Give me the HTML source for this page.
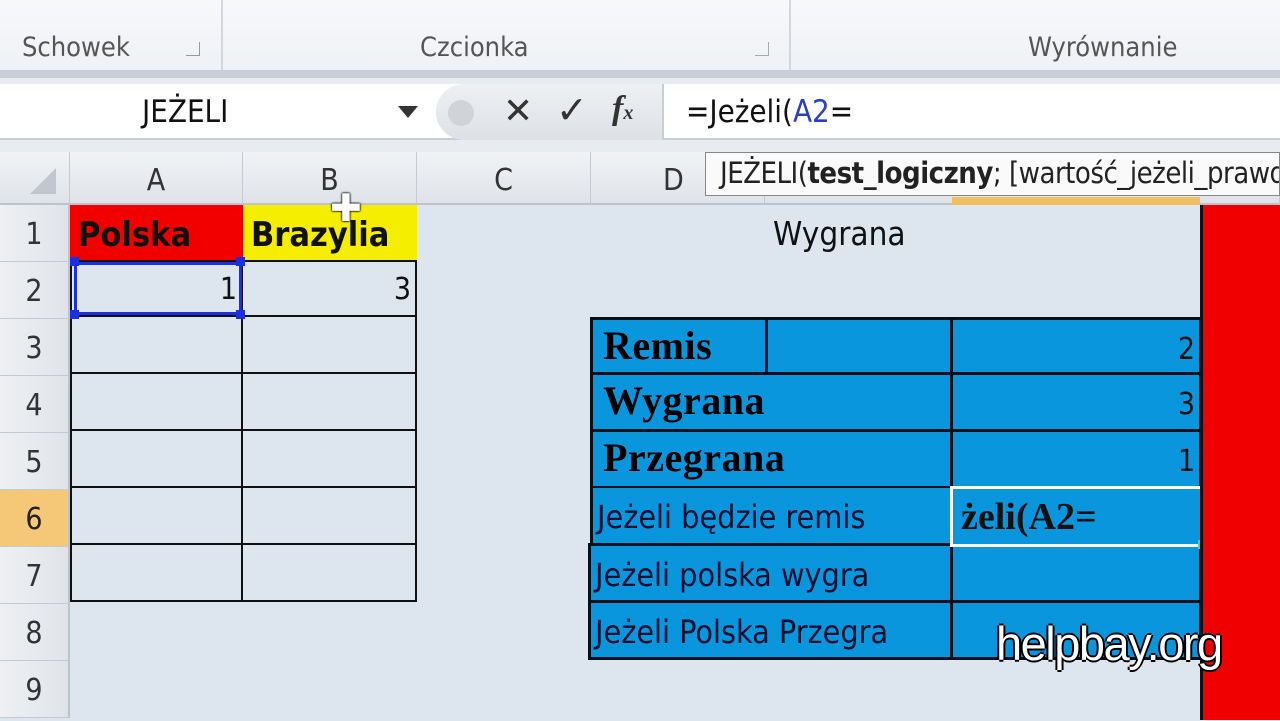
<!DOCTYPE html>
<html><head><meta charset="utf-8"><style>
*{margin:0;padding:0;box-sizing:border-box}
body{width:1280px;height:720px;overflow:hidden;position:relative;background:#dde5ef;font-family:"Liberation Sans",sans-serif}
.a{position:absolute}
.rib{left:0;top:0;width:1280px;height:74px;background:linear-gradient(#f7f8fa,#eef1f5)}
.gl{top:32px;font-size:27px;color:#555;font-family:"DejaVu Sans Condensed","Liberation Sans",sans-serif}
.ch{top:152px;height:53px;background:linear-gradient(#f1f3f6,#dfe3e8);border-right:1px solid #c5cad2;font-size:30px;color:#333;text-align:center;line-height:58px;border-bottom:2px solid #bcc3cc;font-family:"DejaVu Sans Condensed",sans-serif}
.rh{left:0;width:70px;height:57px;background:linear-gradient(90deg,#eef0f3,#e0e4e9);border-bottom:1px solid #c5cad2;border-right:2px solid #bcc3cc;font-size:30px;color:#333;text-align:center;line-height:60px;font-family:"DejaVu Sans Condensed",sans-serif}
.bc{background:#0a96dc;border:3px solid #05101a}
.bt{font-family:"Liberation Serif",serif;font-weight:900;font-size:40px;color:#000;line-height:52px;padding-left:10px;letter-spacing:0.5px}
.nt{font-family:"DejaVu Sans Condensed","Liberation Sans",sans-serif;font-size:32px;color:#001030;line-height:58px;padding-left:4px}
.num{font-size:30px;text-align:right;padding-right:4px;line-height:60px;color:#111;font-family:"DejaVu Sans Condensed",sans-serif}
.grid{border-right:2px solid #111;border-bottom:2px solid #111}
</style></head><body>
<div class="a rib"></div>
<div class="a" style="left:0;top:70px;width:1280px;height:8px;background:#c9ced6"></div>
<div class="a" style="left:221px;top:0;width:2px;height:70px;background:#d3d7dd"></div>
<div class="a" style="left:789px;top:0;width:2px;height:70px;background:#d3d7dd"></div>
<div class="a gl" style="left:22px">Schowek</div>
<div class="a" style="left:186px;top:42px;width:14px;height:14px;border:1px solid #999;border-top:none;border-left:none"></div>
<div class="a gl" style="left:420px">Czcionka</div>
<div class="a" style="left:755px;top:42px;width:14px;height:14px;border:1px solid #aaa;border-top:none;border-left:none"></div>
<div class="a gl" style="left:1028px">Wyrównanie</div>
<div class="a" style="left:0;top:78px;width:1280px;height:74px;background:#e8ebef"></div>
<div class="a" style="left:0;top:84px;width:1280px;height:56px;background:#fff;border-bottom:2px solid #c9ced6"></div>
<div class="a" style="left:142px;top:94px;font-size:31px;color:#111;font-family:'DejaVu Sans Condensed',sans-serif">JEŻELI</div>
<div class="a" style="left:398px;top:106px;width:0;height:0;border-left:10px solid transparent;border-right:10px solid transparent;border-top:12px solid #333"></div>
<div class="a" style="left:436px;top:84px;width:228px;height:56px;background:linear-gradient(#eef0f3,#dde1e6);border-radius:28px 0 0 28px;border-right:2px solid #c9ced6"></div>
<div class="a" style="left:448px;top:100px;width:26px;height:26px;border-radius:50%;background:#d0d4d9"></div>
<div class="a" style="left:503px;top:90px;font-size:36px;color:#333">✕</div>
<div class="a" style="left:556px;top:88px;font-size:38px;color:#333">✓</div>
<div class="a" style="left:612px;top:90px;font-size:34px;color:#333;font-family:'Liberation Serif',serif;font-style:italic;font-weight:bold">f<span style="font-size:20px">x</span></div>
<div class="a" style="left:686px;top:94px;font-size:31px;color:#111;font-family:'DejaVu Sans Condensed',sans-serif">=Jeżeli(<span style="color:#2a3fc8">A2</span>=</div>
<div class="a ch" style="left:0;width:70px"></div>
<div class="a" style="left:30px;top:168px;width:0;height:0;border-left:26px solid transparent;border-bottom:26px solid #c2c7ce"></div>
<div class="a ch" style="left:70px;width:173px">A</div>
<div class="a ch" style="left:243px;width:174px">B</div>
<div class="a ch" style="left:417px;width:174px">C</div>
<div class="a ch" style="left:591px;width:174px;text-align:left;padding-left:72px">D</div>
<div class="a ch" style="left:765px;width:515px"></div>
<div class="a" style="left:705px;top:152px;width:575px;height:44px;background:#fafafa;border:1px solid #888;font-size:29px;line-height:40px;padding-left:14px;color:#222;white-space:nowrap;overflow:hidden;font-family:'DejaVu Sans Condensed',sans-serif;letter-spacing:-0.5px">JEŻELI(<b>test_logiczny</b>; [wartość_jeżeli_prawda]</div>
<div class="a" style="left:952px;top:197px;width:248px;height:8px;background:#f0c060"></div>
<div class="a rh" style="top:205px">1</div>
<div class="a rh" style="top:262px">2</div>
<div class="a rh" style="top:319px">3</div>
<div class="a rh" style="top:376px">4</div>
<div class="a rh" style="top:433px">5</div>
<div class="a rh" style="top:490px;background:#f5c878;color:#222">6</div>
<div class="a rh" style="top:547px">7</div>
<div class="a rh" style="top:604px">8</div>
<div class="a rh" style="top:661px">9</div>
<div class="a" style="left:70px;top:205px;width:173px;height:55px;background:#f20000;font-family:'DejaVu Sans Condensed',sans-serif;font-weight:bold;font-size:34px;line-height:60px;padding-left:8px;color:#111">Polska</div>
<div class="a" style="left:243px;top:205px;width:174px;height:55px;background:#f5ee00;font-family:'DejaVu Sans Condensed',sans-serif;font-weight:bold;font-size:34px;line-height:60px;padding-left:8px;color:#111;white-space:nowrap">Brazylia</div>
<div class="a" style="left:70px;top:260px;width:347px;height:342px;border-top:2px solid #111;border-left:2px solid #111"></div>
<div class="a grid num" style="left:70px;top:260px;width:173px;height:57px">1</div>
<div class="a grid num" style="left:243px;top:260px;width:174px;height:57px">3</div>
<div class="a grid" style="left:70px;top:317px;width:173px;height:57px"></div>
<div class="a grid" style="left:243px;top:317px;width:174px;height:57px"></div>
<div class="a grid" style="left:70px;top:374px;width:173px;height:57px"></div>
<div class="a grid" style="left:243px;top:374px;width:174px;height:57px"></div>
<div class="a grid" style="left:70px;top:431px;width:173px;height:57px"></div>
<div class="a grid" style="left:243px;top:431px;width:174px;height:57px"></div>
<div class="a grid" style="left:70px;top:488px;width:173px;height:57px"></div>
<div class="a grid" style="left:243px;top:488px;width:174px;height:57px"></div>
<div class="a grid" style="left:70px;top:545px;width:173px;height:57px"></div>
<div class="a grid" style="left:243px;top:545px;width:174px;height:57px"></div>
<div class="a" style="left:74px;top:262px;width:168px;height:53px;border:3px solid #1a2fe0"></div>
<div class="a" style="left:70px;top:257px;width:9px;height:9px;background:#1a2fe0"></div>
<div class="a" style="left:236px;top:257px;width:9px;height:9px;background:#1a2fe0"></div>
<div class="a" style="left:70px;top:310px;width:9px;height:9px;background:#1a2fe0"></div>
<div class="a" style="left:236px;top:310px;width:9px;height:9px;background:#1a2fe0"></div>
<div class="a" style="left:330px;top:186px;font-size:38px;color:#fff;text-shadow:0 0 2px #000,0 0 2px #000,0 0 1px #000">✚</div>
<div class="a" style="left:773px;top:214px;font-size:33px;color:#111;font-family:'DejaVu Sans Condensed',sans-serif">Wygrana</div>
<div class="a bc bt" style="left:590px;top:317px;width:178px;height:58px">Remis</div>
<div class="a bc" style="left:765px;top:317px;width:188px;height:58px"></div>
<div class="a bc num" style="left:950px;top:317px;width:252px;height:58px">2</div>
<div class="a bc bt" style="left:590px;top:372px;width:363px;height:60px">Wygrana</div>
<div class="a bc num" style="left:950px;top:372px;width:252px;height:60px">3</div>
<div class="a bc bt" style="left:590px;top:429px;width:363px;height:60px">Przegrana</div>
<div class="a bc num" style="left:950px;top:429px;width:252px;height:60px">1</div>
<div class="a bc nt" style="left:590px;top:486px;width:363px;height:60px;border-top:2px solid #05101a">Jeżeli będzie remis</div>
<div class="a bc nt" style="left:588px;top:543px;width:365px;height:60px">Jeżeli polska wygra</div>
<div class="a bc" style="left:950px;top:543px;width:252px;height:60px"></div>
<div class="a bc nt" style="left:588px;top:600px;width:365px;height:60px;white-space:nowrap">Jeżeli Polska Przegra</div>
<div class="a bc" style="left:950px;top:600px;width:252px;height:60px"></div>
<div class="a" style="left:950px;top:486px;width:254px;height:61px;background:#0a96dc;border:3px solid #fff;font-family:'Liberation Serif',serif;font-weight:900;font-size:38px;line-height:56px;padding-left:8px;color:#111">żeli(A2=</div>
<div class="a" style="left:1198px;top:540px;width:9px;height:9px;background:#2fd0e0"></div>
<div class="a" style="left:1200px;top:205px;width:80px;height:515px;background:#f00000;border-left:3px solid #111"></div>
<div class="a" style="left:996px;top:616px;font-size:47px;color:#fff;letter-spacing:-1.5px;text-shadow:-2px 0 #000,2px 0 #000,0 -2px #000,0 2px #000">helpbay.org</div>
</body></html>
